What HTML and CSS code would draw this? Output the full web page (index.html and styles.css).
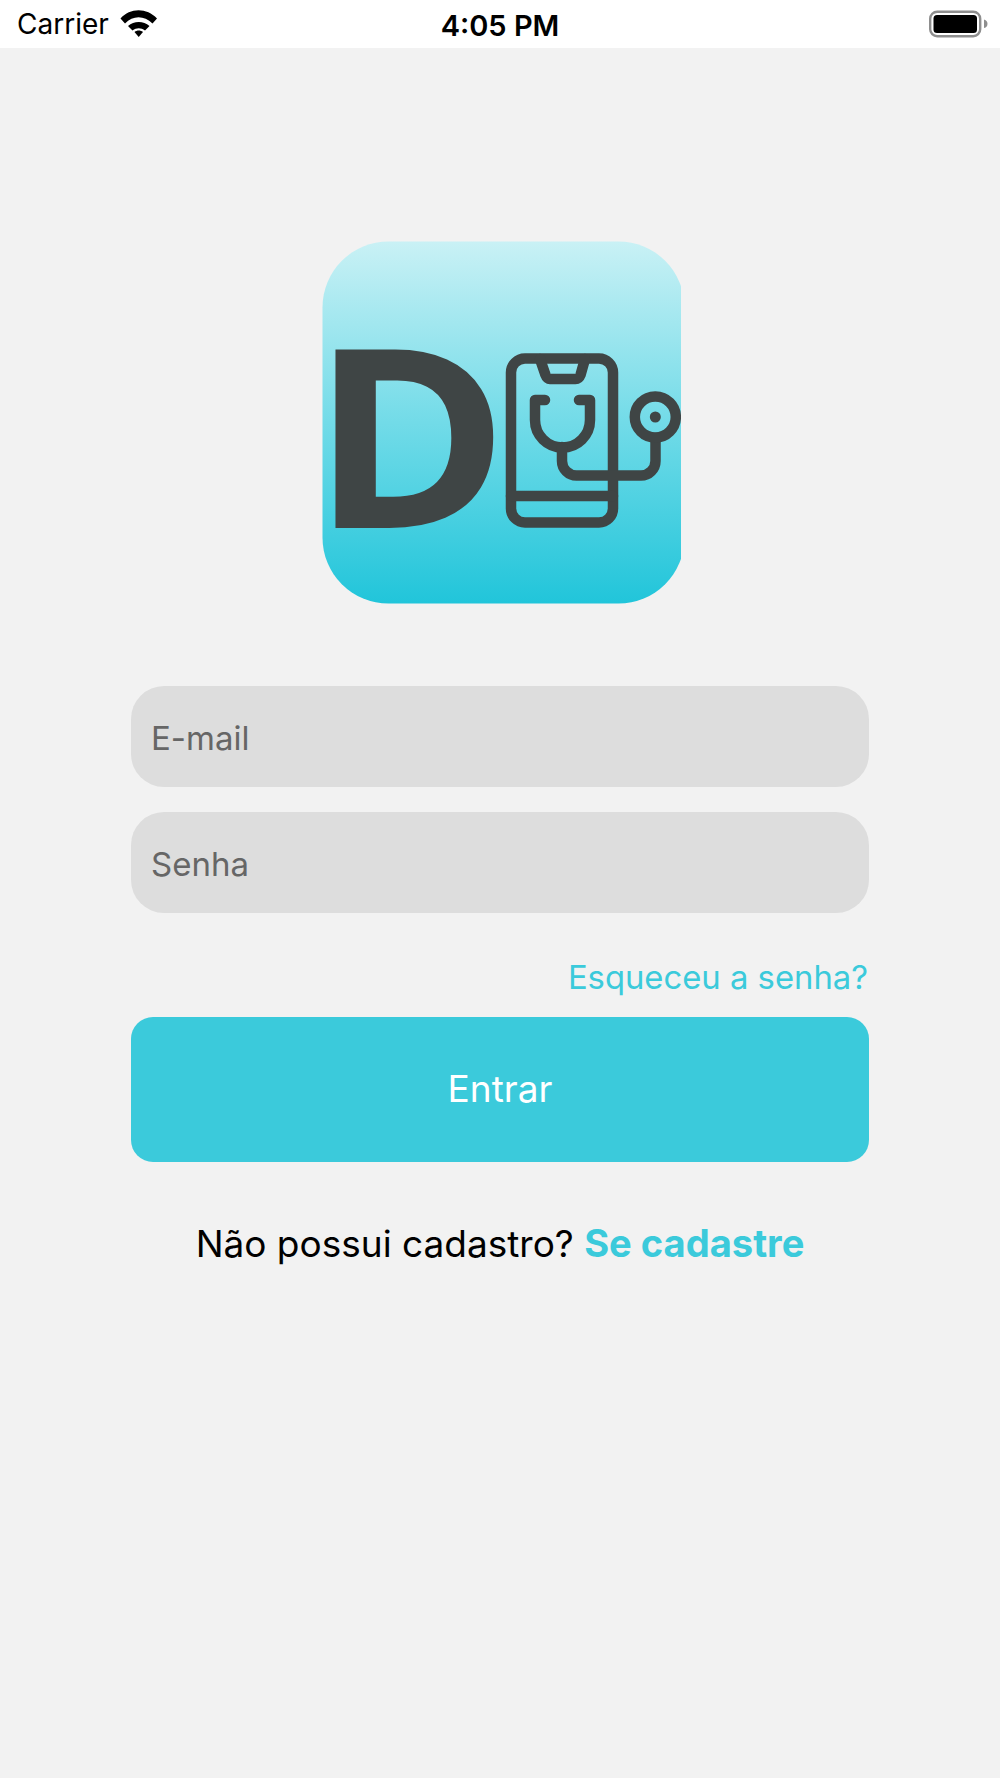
FILE: index.html
```html
<!DOCTYPE html>
<html lang="pt">
<head>
<meta charset="utf-8">
<title>Login</title>
<link rel="stylesheet" href="styles.css">
</head>
<body>
<header class="status-bar">
  <div class="status-left">
    <span class="carrier">Carrier</span>
    <svg class="wifi" viewBox="120 9 38 29" aria-hidden="true">
      <path d="M120.5 18.5C130 7.5 147 7.5 157 18.5L152.5 23.5C144 15 133 15 125 23.5Z"/>
      <path d="M128 26C134 20.5 143.5 20.5 149.5 26L145 30.5C141 27.5 136.5 27.5 132.5 30.5Z"/>
      <path d="M134.5 32C137 30 140.500 30 143 32L138.700 37Z"/>
    </svg>
  </div>
  <span class="time">4:05 PM</span>
  <svg class="battery" viewBox="0 0 60 28" aria-hidden="true">
    <rect x="1.2" y="1.7" width="50" height="24.500" rx="7" fill="none" stroke="#8e8e8e" stroke-width="2.4"/>
    <rect x="4.500" y="5" width="43.500" height="18" rx="3.500" fill="#000"/>
    <path d="M55 9.500c2.500.6 3.500 2.400 3.500 4.300s-1 3.700-3.500 4.300z" fill="#8e8e8e"/>
  </svg>
</header>
<main class="screen">
  <svg class="logo" viewBox="301 241 380 363" role="img" aria-label="Logo">
    <defs>
      <linearGradient id="logoFill" x1="0" y1="0" x2="0" y2="1">
        <stop offset="0" stop-color="#c9f1f5"/>
        <stop offset="0.5" stop-color="#72dbe8"/>
        <stop offset="1" stop-color="#21c5da"/>
      </linearGradient>
    </defs>
    <rect x="322.500" y="241.500" width="362" height="362" rx="66" fill="url(#logoFill)"/>
    <text class="logo-letter" x="313" y="528" transform="translate(335 0) scale(1.065 1) translate(-335 0)">D</text>
    <g class="logo-lines">
      <rect x="511" y="358.500" width="102" height="164" rx="14"/>
      <path d="M540 359L545.500 375Q547 379 550 379H575.500Q579 379 580.500 375L585 359"/>
      <path d="M511 496H613"/>
      <path d="M545 400H535V420A27.500 27.500 0 0 0 590 420V400H579"/>
      <path d="M562 447V461A14.500 14.500 0 0 0 576.500 475.500H641A14.500 14.500 0 0 0 655.500 461V438"/>
      <circle cx="655.300" cy="417" r="20.500"/>
    </g>
    <circle class="logo-dot" cx="655.300" cy="417" r="5.500"/>
  </svg>
  <form class="login-form">
    <input class="field" type="email" placeholder="E-mail">
    <input class="field" type="password" placeholder="Senha">
    <a class="forgot" href="#">Esqueceu a senha?</a>
    <button class="submit" type="button">Entrar</button>
    <p class="signup">Não possui cadastro? <a href="#">Se cadastre</a></p>
  </form>
</main>
</body>
</html>
```
FILE: styles.css
```css
* { box-sizing: border-box; }
html, body { margin: 0; padding: 0; }
body {
  width: 1000px;
  height: 1778px;
  background: #f2f2f2;
  font-family: Inter, "Liberation Sans", sans-serif;
  overflow: hidden;
}
.status-bar {
  position: relative;
  height: 48px;
  background: #fff;
  color: #000;
  display: flex;
  align-items: center;
  justify-content: center;
}
.status-left {
  position: absolute;
  left: 17px;
  top: 0;
  height: 48px;
  display: flex;
  align-items: center;
  gap: 11px;
}
.carrier { font-size: 28px; }
.wifi { width: 38px; height: 29px; margin-top: -2px; fill: #000; }
.time { font-size: 29px; font-weight: 600; padding-top: 3px; }
.battery { position: absolute; left: 929px; top: 10px; width: 60px; height: 28px; }
.screen {
  display: flex;
  flex-direction: column;
  padding: 193px 131px 0;
}
.logo { display: block; width: 380px; height: 363px; margin-left: 170px; }
.logo-letter {
  font-family: "Open Sans", sans-serif;
  font-size: 250px;
  font-weight: 700;
  fill: #3f4545;
}
.logo-lines {
  fill: none;
  stroke: #3f4545;
  stroke-width: 10.500;
  stroke-linecap: round;
  stroke-linejoin: round;
}
.logo-dot { fill: #3f4545; }
.login-form { display: flex; flex-direction: column; margin-top: 82px; }
.field {
  width: 738px;
  height: 101px;
  margin-bottom: 25px;
  padding: 2px 20px 0;
  border: 0;
  border-radius: 33px;
  background: #ddd;
  color: #666;
  font: 400 33px Inter, "Liberation Sans", sans-serif;
  outline: 0;
}
.field::placeholder { color: #666; opacity: 1; }
.forgot {
  align-self: flex-end;
  margin-top: 20px;
  margin-right: 1px;
  color: #3bcadb;
  font-size: 32.800px;
  line-height: 38px;
  text-decoration: none;
}
.submit {
  width: 738px;
  height: 145px;
  margin-top: 21px;
  padding: 0 0 2px;
  border: 0;
  border-radius: 22px;
  background: #3bcadb;
  color: #fff;
  font: 400 37px Inter, "Liberation Sans", sans-serif;
}
.signup {
  margin: 59px 0 0;
  color: #000;
  font-size: 37px;
  line-height: 44px;
  text-align: center;
}
.signup a { color: #3bcadb; font-size: 38.100px; font-weight: 700; text-decoration: none; }
```
